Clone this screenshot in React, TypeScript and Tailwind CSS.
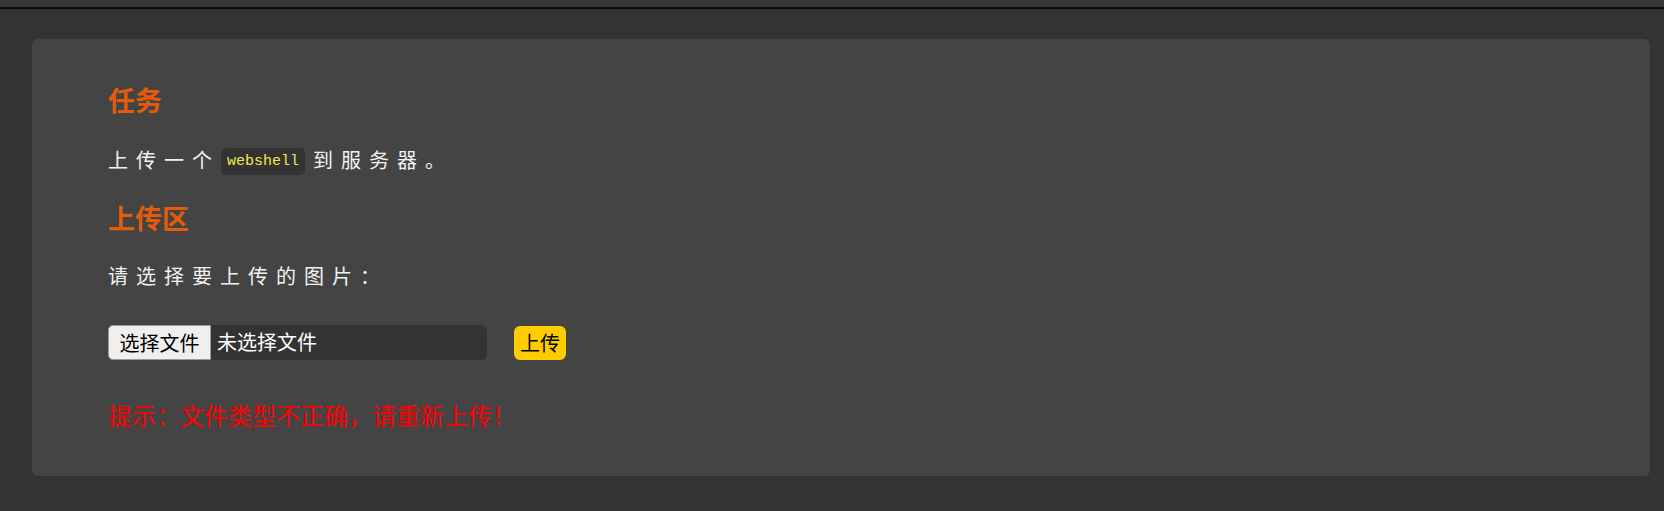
const cjk = "font-['Noto_Sans_CJK_SC','Noto_Sans',sans-serif]";

export default function App() {
  return (
    <div className={`min-h-[511px] w-full bg-[#333333] ${cjk}`}>
      <div className="h-[9px] border-b-2 border-[#0b0b0b] bg-[#363636]" />

      <div className="pt-[30px] pr-[14px] pl-[32px]">
        <div className="rounded-[6px] bg-[#444444] px-[76px] pt-[48px] pb-[47px] text-[#f2f2f2]">
          {/* 任务 */}
          <h2 className="text-[27px] leading-[26px] font-bold text-[#e35c0a]">任务</h2>

          <div className="mt-[33px] flex h-[28px] items-center text-[20px] leading-[28px]">
            <span className="tracking-[8px]">上传一个</span>
            <code className="mt-[3px] ml-px inline-block h-[27px] rounded-[5px] bg-[#333333] px-[6px] font-['Liberation_Mono',monospace] text-[15px] leading-[27px] font-normal text-[#f3e84b]">
              webshell
            </code>
            <span className="ml-[8px] tracking-[8px]">到服务器。</span>
          </div>

          {/* 上传区 */}
          <h2 className="mt-[31px] text-[27px] leading-[26px] font-bold text-[#e35c0a]">上传区</h2>

          <p className="mt-[31px] text-[20px] leading-[28px] tracking-[8px]">请选择要上传的图片：</p>

          <div className="mt-[34px] flex items-center">
            <div className="flex h-[35px] w-[379px] items-center rounded-[6px] bg-[#333333]">
              <button
                type="button"
                className="h-[35px] w-[103px] rounded-l-[5px] border border-[#9a9a9a] bg-[#efefef] text-[20px] leading-[33px] text-black"
              >
                选择文件
              </button>
              <span className="ml-[6px] text-[20px] leading-[28px] text-white">未选择文件</span>
            </div>
            <button
              type="button"
              className="mt-[2px] ml-[27px] h-[34px] w-[52px] rounded-[6px] bg-[#ffcc00] text-[20px] leading-[34px] text-black"
            >
              上传
            </button>
          </div>

          <p className="mt-[41px] text-[24px] leading-[28px] text-[#ff0000]">提示：文件类型不正确，请重新上传！</p>
        </div>
      </div>
    </div>
  );
}
